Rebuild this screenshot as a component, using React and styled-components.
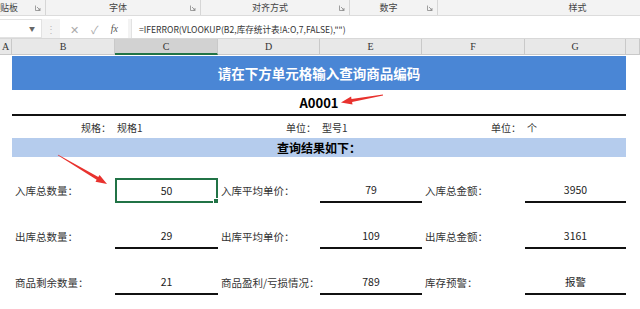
import React from "react";
import styled, { createGlobalStyle } from "styled-components";

const GlobalStyle = createGlobalStyle`
  html, body {
    margin: 0;
    padding: 0;
    background: #fff;
  }
  body {
    font-family: "Noto Sans CJK SC", "Noto Sans", sans-serif;
    width: 640px;
    height: 309px;
    overflow: hidden;
  }
`;

const COLS = "12px 103px 103px 102px 102px 103px 101px 14px";

const Screen = styled.div`
  position: relative;
  width: 640px;
  height: 309px;
  overflow: hidden;
`;

/* ribbon group labels */
const Ribbon = styled.div`
  display: flex;
  height: 15px;
  background: #f3f3f3;
  border-bottom: 1px solid #dcdcdc;
  overflow: hidden;
`;

const Group = styled.div`
  position: relative;
  flex: 0 0 ${(p) => p.$w}px;
  display: flex;
  align-items: center;
  justify-content: ${(p) => (p.$left ? "flex-start" : "center")};
  border-right: 1px solid #d6d6d6;
  font-size: 9px;
  color: #444;
  padding-right: ${(p) => (p.$left ? 0 : 10)}px;
  box-sizing: border-box;
`;

const Launcher = styled.svg`
  position: absolute;
  right: 4px;
  top: 5px;
  width: 6px;
  height: 6px;
`;

const FormulaBar = styled.div`
  display: flex;
  align-items: stretch;
  height: 19px;
  margin-top: 3px;
  background: #f3f3f3;
`;

const NameBox = styled.div`
  flex: 0 0 42px;
  background: #fff;
  border: 1px solid #e2e2e2;
  border-left: none;
  box-sizing: border-box;
  display: flex;
  align-items: center;
  justify-content: flex-end;
  padding-right: 6px;
  font-size: 6px;
  color: #666;
`;

const Dots = styled.div`
  flex: 0 0 18px;
  display: flex;
  align-items: center;
  justify-content: center;
  color: #bbb;
  font-size: 10px;
`;

const Buttons = styled.div`
  flex: 0 0 68px;
  background: #fff;
  display: flex;
  align-items: center;
  justify-content: space-around;
  padding: 0 4px;
  box-sizing: border-box;
  color: #aaa;
  font-size: 11px;
`;

const Fx = styled.span`
  font-family: "Liberation Serif", serif;
  font-style: italic;
  font-size: 10px;
  color: #555;
`;

const FormulaInput = styled.div`
  flex: 1;
  margin-left: 3px;
  background: #fff;
  border-left: 1px solid #e2e2e2;
  display: flex;
  align-items: center;
  padding-left: 7px;
  font-size: 8.6px;
  color: #333;
  white-space: nowrap;
`;

/* sheet */
const ColHeader = styled.div`
  display: grid;
  grid-template-columns: ${COLS};
  height: 17px;
  background: #e8e8e8;
  border-top: 1px solid #d8d8d8;
  box-sizing: border-box;
`;

const HeadCell = styled.div`
  display: flex;
  align-items: center;
  justify-content: center;
  font-family: "Liberation Serif", serif;
  font-size: 10px;
  color: #333;
  border-right: 1px solid #c9c9c9;
  box-sizing: border-box;
  background: ${(p) => (p.$active ? "#d2d2d2" : "transparent")};
  border-bottom: ${(p) => (p.$active ? "2px solid #217346" : "1px solid #c9c9c9")};
`;

const Sheet = styled.div`
  display: grid;
  grid-template-columns: ${COLS};
  grid-auto-rows: auto;
`;

const Banner = styled.div`
  grid-column: 2 / 8;
  height: ${(p) => p.$h}px;
  background: ${(p) => p.$bg};
  color: ${(p) => p.$color || "#000"};
  font-size: ${(p) => p.$size}px;
  font-weight: 700;
  display: flex;
  align-items: center;
  justify-content: center;
  border-bottom: ${(p) => (p.$line ? "2px solid #111" : "none")};
  box-sizing: border-box;
`;

const Spacer = styled.div`
  grid-column: 1 / -1;
  height: ${(p) => p.$h}px;
`;

const Blank = styled.div``;

const SpecLabel = styled.div`
  height: 22px;
  display: flex;
  align-items: center;
  justify-content: ${(p) => (p.$right ? "flex-end" : "flex-start")};
  padding: 0 ${(p) => (p.$right ? 4 : 2)}px;
  font-size: 10px;
  color: #333;
`;

const Label = styled.div`
  height: 25px;
  display: flex;
  align-items: center;
  padding-left: 3px;
  font-size: 10.5px;
  color: #333;
  white-space: nowrap;
`;

const Value = styled.div`
  position: relative;
  height: 25px;
  display: flex;
  align-items: center;
  justify-content: center;
  font-size: 10.5px;
  color: #222;
  box-sizing: border-box;
  border-bottom: 2px solid #111;
  ${(p) =>
    p.$selected &&
    `
    border: 2px solid #217346;
  `}
`;

const Handle = styled.span`
  position: absolute;
  right: -3px;
  bottom: -3px;
  width: 4px;
  height: 4px;
  background: #217346;
  border: 1px solid #fff;
`;

const Overlay = styled.svg`
  position: absolute;
  left: 0;
  top: 0;
  width: 640px;
  height: 309px;
  pointer-events: none;
`;

const groups = [
  { w: 46, text: "贴板", left: true },
  { w: 155, text: "字体" },
  { w: 149, text: "对齐方式" },
  { w: 88, text: "数字" },
  { w: 290, text: "样式", noLauncher: true },
];

const rows = [
  [
    ["入库总数量：", "50", true],
    ["入库平均单价：", "79"],
    ["入库总金额：", "3950"],
  ],
  [
    ["出库总数量：", "29"],
    ["出库平均单价：", "109"],
    ["出库总金额：", "3161"],
  ],
  [
    ["商品剩余数量：", "21"],
    ["商品盈利/亏损情况：", "789"],
    ["库存预警：", "报警"],
  ],
];

// tapered red arrow from tail to tip
function arrowPoints([tx, ty], [hx, hy]) {
  const dx = hx - tx;
  const dy = hy - ty;
  const len = Math.hypot(dx, dy);
  const ux = dx / len;
  const uy = dy / len;
  const nx = -uy;
  const ny = ux;
  const headLen = 11;
  const bx = hx - ux * headLen;
  const by = hy - uy * headLen;
  const p = (x, y) => `${x.toFixed(1)},${y.toFixed(1)}`;
  return [
    p(tx + nx * 0.4, ty + ny * 0.4),
    p(bx + nx * 1.6, by + ny * 1.6),
    p(bx + nx * 4, by + ny * 4),
    p(hx, hy),
    p(bx - nx * 4, by - ny * 4),
    p(bx - nx * 1.6, by - ny * 1.6),
    p(tx - nx * 0.4, ty - ny * 0.4),
  ].join(" ");
}

export default function App() {
  return (
    <Screen>
      <GlobalStyle />
      <Ribbon>
        {groups.map((g) => (
          <Group key={g.text} $w={g.w} $left={g.left}>
            {g.text}
            {!g.noLauncher && (
              <Launcher viewBox="0 0 6 6">
                <path d="M0.5 0.5V5.5H5.5" fill="none" stroke="#888" strokeWidth="0.8" />
                <path d="M2 2L5 5M3 5H5V3" fill="none" stroke="#888" strokeWidth="0.8" />
              </Launcher>
            )}
          </Group>
        ))}
      </Ribbon>

      <FormulaBar>
        <NameBox>▼</NameBox>
        <Dots>⋮</Dots>
        <Buttons>
          <span>✕</span>
          <span>✓</span>
          <Fx>fx</Fx>
        </Buttons>
        <FormulaInput>=IFERROR(VLOOKUP(B2,库存统计表!A:O,7,FALSE),"")</FormulaInput>
      </FormulaBar>

      <ColHeader>
        {["A", "B", "C", "D", "E", "F", "G", ""].map((c, i) => (
          <HeadCell key={i} $active={c === "C"}>
            {c}
          </HeadCell>
        ))}
      </ColHeader>

      <Sheet>
        <Spacer $h={1} />
        <Blank />
        <Banner $h={34} $bg="#4a86d5" $color="#fff" $size={13.5}>
          请在下方单元格输入查询商品编码
        </Banner>
        <Blank />

        <Blank />
        <Banner $h={26} $bg="#fff" $size={13} $line>
          A0001
        </Banner>
        <Blank />

        <Blank />
        <SpecLabel $right>规格：</SpecLabel>
        <SpecLabel>规格1</SpecLabel>
        <SpecLabel $right>单位：</SpecLabel>
        <SpecLabel>型号1</SpecLabel>
        <SpecLabel $right>单位：</SpecLabel>
        <SpecLabel>个</SpecLabel>
        <Blank />

        <Blank />
        <Banner $h={19} $bg="#b5cced" $size={12}>
          查询结果如下：
        </Banner>
        <Blank />

        {rows.map((row, r) => (
          <React.Fragment key={r}>
            <Spacer $h={r === 0 ? 21 : 21} />
            <Blank />
            {row.map(([label, value, selected]) => (
              <React.Fragment key={label}>
                <Label>{label}</Label>
                <Value $selected={selected}>
                  {value}
                  {selected && <Handle />}
                </Value>
              </React.Fragment>
            ))}
            <Blank />
          </React.Fragment>
        ))}
      </Sheet>

      <Overlay viewBox="0 0 640 309">
        <polygon points={arrowPoints([383, 95], [341, 102.5])} fill="#e8322e" />
        <polygon points={arrowPoints([58, 155], [107, 184])} fill="#e8322e" />
      </Overlay>
    </Screen>
  );
}
